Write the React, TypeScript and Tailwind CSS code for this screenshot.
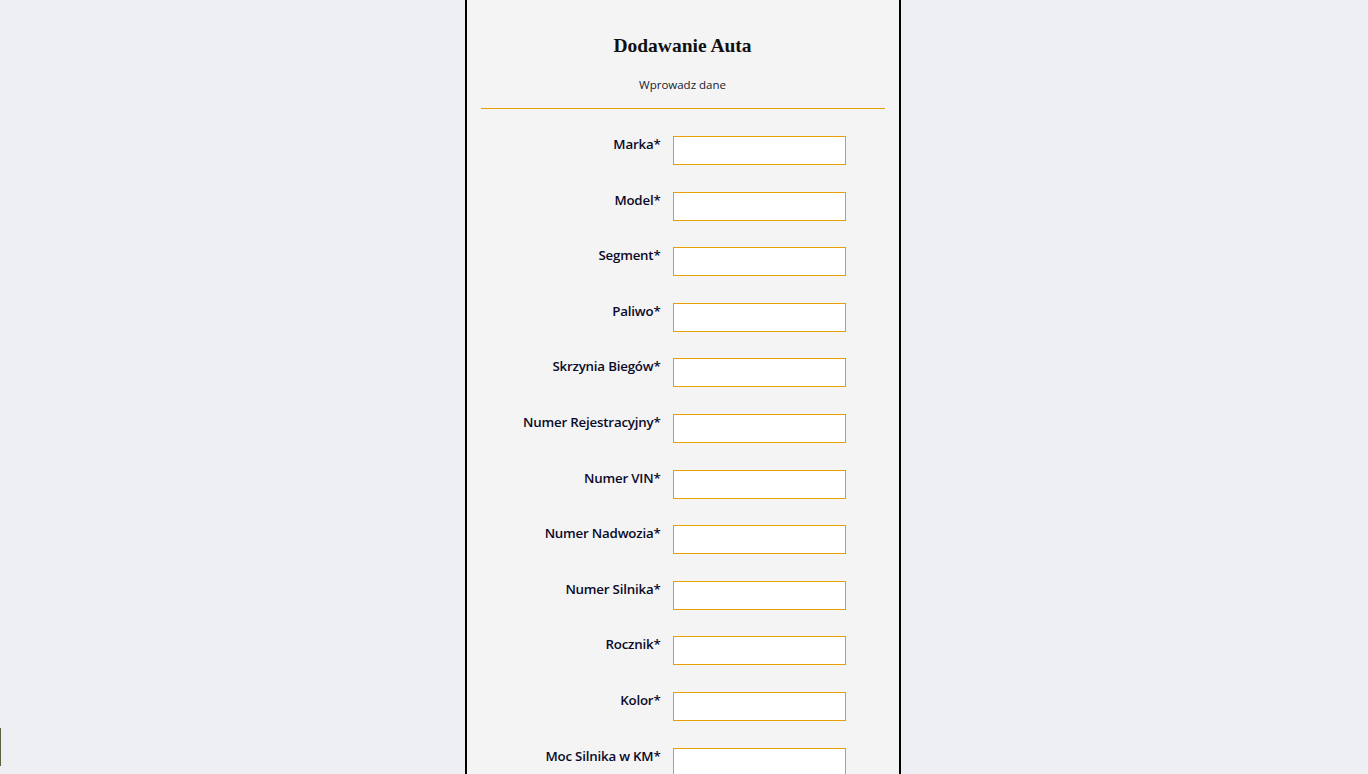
import React from "react";

const fields = [
  "Marka",
  "Model",
  "Segment",
  "Paliwo",
  "Skrzynia Biegów",
  "Numer Rejestracyjny",
  "Numer VIN",
  "Numer Nadwozia",
  "Numer Silnika",
  "Rocznik",
  "Kolor",
  "Moc Silnika w KM",
];

export default function App() {
  return (
    <div className="relative min-h-[774px] h-[774px] overflow-hidden bg-[#eeeff2] flex justify-center">
      <div className="absolute left-0 top-[728px] w-px h-[38px] bg-[#5b6142]" />
      <div className="w-[436px] -ml-[3px] border-x-2 border-black bg-[#f4f4f4] flex flex-col items-stretch">
        <h1
          className="mt-[34px] text-center text-[19.5px] leading-[24px] font-bold text-[#111]"
          style={{ fontFamily: '"Liberation Serif", serif' }}
        >
          Dodawanie Auta
        </h1>
        <p
          className="mt-[19px] text-center text-[11.5px] leading-[16px] text-[#1a1a2e]"
          style={{ fontFamily: '"Open Sans", sans-serif' }}
        >
          Wprowadz dane
        </p>
        <hr className="mx-[14px] mt-[15px] border-0 border-t border-[#e5a102]" />
        <div className="flex flex-col mt-[27px]">
          {fields.map((f, i) => (
            <div
              key={f}
              className={`flex items-start ${i === 0 ? "" : "mt-[26.6px]"}`}
            >
              <label
                className="w-[194px] text-right text-[13.3px] leading-[17px] font-semibold text-[#0a0a2a] tracking-[-0.2px]"
                style={{ fontFamily: '"Open Sans", sans-serif' }}
              >
                {f}*
              </label>
              <input
                type="text"
                className="ml-[12px] w-[173px] h-[29px] bg-white border border-[#e5a102] outline-none"
              />
            </div>
          ))}
        </div>
      </div>
    </div>
  );
}
